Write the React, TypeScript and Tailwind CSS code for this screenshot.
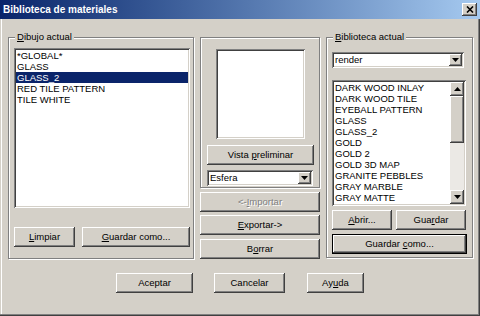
import React from "react";

const raised =
  "shadow-[inset_-1px_-1px_#404040,inset_1px_1px_#ffffff,inset_-2px_-2px_#808080,inset_2px_2px_#d4d0c8]";
const sunken =
  "shadow-[inset_1px_1px_#808080,inset_-1px_-1px_#ffffff,inset_2px_2px_#404040,inset_-2px_-2px_#d4d0c8]";
const etched = "border border-[#808080] shadow-[inset_1px_1px_#ffffff,1px_1px_#ffffff]";

function Btn({
  children,
  className = "",
  disabled = false,
  def = false,
}: {
  children: React.ReactNode;
  className?: string;
  disabled?: boolean;
  def?: boolean;
}) {
  if (def) {
    return (
      <div className={`border border-black bg-[#d4d0c8] ${className}`}>
        <div className={`flex h-full w-full items-center justify-center ${raised}`}>{children}</div>
      </div>
    );
  }
  return (
    <div
      className={`flex items-center justify-center bg-[#d4d0c8] ${raised} ${
        disabled ? "text-[#808080] [text-shadow:1px_1px_#ffffff]" : "text-black"
      } ${className}`}
    >
      {children}
    </div>
  );
}

function Arrow({ up = false }: { up?: boolean }) {
  return (
    <svg width="7" height="4" viewBox="0 0 7 4">
      {up ? <polygon points="3.5,0 7,4 0,4" fill="#000" /> : <polygon points="0,0 7,0 3.5,4" fill="#000" />}
    </svg>
  );
}

function Combo({ value, className = "" }: { value: string; className?: string }) {
  return (
    <div className={`flex bg-white p-[2px] ${sunken} ${className}`}>
      <div className="flex flex-1 items-center pl-[1px] leading-[12px]">{value}</div>
      <div className={`flex w-[13px] items-center justify-center bg-[#d4d0c8] ${raised}`}>
        <Arrow />
      </div>
    </div>
  );
}

function U({ children }: { children: React.ReactNode }) {
  return <span className="underline underline-offset-[1px]">{children}</span>;
}

const leftItems = ["*GLOBAL*", "GLASS", "GLASS_2", "RED TILE PATTERN", "TILE WHITE"];
const rightItems = [
  "DARK WOOD INLAY",
  "DARK WOOD TILE",
  "EYEBALL PATTERN",
  "GLASS",
  "GLASS_2",
  "GOLD",
  "GOLD 2",
  "GOLD 3D MAP",
  "GRANITE PEBBLES",
  "GRAY MARBLE",
  "GRAY MATTE",
];

export default function App() {
  return (
    <div className="flex h-[316px] w-[480px] flex-col overflow-hidden bg-[#d4d0c8] font-['Liberation_Sans',Arial,sans-serif] text-[9.5px] text-black shadow-[inset_-1px_-1px_#404040,inset_-2px_-2px_#808080,inset_1px_1px_#d4d0c8,inset_2px_2px_#ffffff]">
      {/* Title bar */}
      <div className="flex h-[19px] items-center bg-gradient-to-r from-[#0a246a] to-[#a6caf0] pl-[3px] pr-[3px]">
        <div className="flex-1 text-[10px] font-bold leading-[12px] text-white">Biblioteca de materiales</div>
        <div className={`flex h-[13px] w-[15px] items-center justify-center bg-[#d4d0c8] ${raised}`}>
          <svg width="8" height="7" viewBox="0 0 8 7">
            <path d="M1 0.5 L7 6.5 M7 0.5 L1 6.5" stroke="#000" strokeWidth="1.6" />
          </svg>
        </div>
      </div>

      {/* Upper row */}
      <div className="flex pl-[8px] pt-[18px]">
        {/* Left group */}
        <div className={`flex h-[222px] w-[186px] flex-col ${etched}`}>
          <div className="-mt-[7px] ml-[6px] w-fit bg-[#d4d0c8] px-[2px] leading-[12px]">
            <U>D</U>ibujo actual
          </div>
          <div className={`ml-[5px] mt-[5px] h-[160px] w-[176px] bg-white p-[2px] ${sunken}`}>
            {leftItems.map((it) => (
              <div
                key={it}
                className={`h-[11px] pl-[1px] leading-[11px] ${
                  it === "GLASS_2" ? "bg-[#0a246a] text-white" : ""
                }`}
              >
                {it}
              </div>
            ))}
          </div>
          <div className="ml-[5px] mt-[19px] flex gap-[7px]">
            <Btn className="h-[20px] w-[61px]">
              <span>
                <U>L</U>impiar
              </span>
            </Btn>
            <Btn className="h-[20px] w-[108px]">
              <span>
                <U>G</U>uardar como...
              </span>
            </Btn>
          </div>
        </div>

        {/* Middle column */}
        <div className="ml-[6px] flex w-[120px] flex-col">
          <div className={`flex h-[151px] w-[120px] flex-col ${etched}`}>
            <div className={`ml-[15px] mt-[11px] h-[90px] w-[89px] bg-white ${sunken}`} />
            <Btn className="ml-[6px] mt-[6px] h-[20px] w-[107px]">
              <span>
                Vista <U>p</U>reliminar
              </span>
            </Btn>
            <Combo value="Esfera" className="ml-[6px] mt-[5px] h-[16px] w-[106px]" />
          </div>
          <Btn disabled className="mt-[4px] h-[20px] w-[120px]">
            <span>
              &lt;-<U>I</U>mportar
            </span>
          </Btn>
          <Btn className="mt-[3px] h-[20px] w-[120px]">
            <span>
              <U>E</U>xportar-&gt;
            </span>
          </Btn>
          <Btn className="mt-[4px] h-[20px] w-[120px]">
            <span>
              B<U>o</U>rrar
            </span>
          </Btn>
        </div>

        {/* Right group */}
        <div className={`ml-[6px] flex h-[221px] w-[147px] flex-col ${etched}`}>
          <div className="-mt-[7px] ml-[6px] w-fit bg-[#d4d0c8] px-[2px] leading-[12px]">
            <U>B</U>iblioteca actual
          </div>
          <Combo value="render" className="ml-[5px] mt-[9px] h-[16px] w-[132px]" />
          <div className={`ml-[5px] mt-[12px] flex h-[126px] w-[134px] bg-white p-[2px] ${sunken}`}>
            <div className="flex-1">
              {rightItems.map((it) => (
                <div key={it} className="h-[11px] pl-[1px] leading-[11px]">
                  {it}
                </div>
              ))}
            </div>
            <div className="flex w-[14px] flex-col">
              <div className={`flex h-[14px] items-center justify-center bg-[#d4d0c8] ${raised}`}>
                <Arrow up />
              </div>
              <div className={`h-[47px] bg-[#d4d0c8] ${raised}`} />
              <div className="flex-1 bg-[#ebe9e5]" />
              <div className={`flex h-[14px] items-center justify-center bg-[#d4d0c8] ${raised}`}>
                <Arrow />
              </div>
            </div>
          </div>
          <div className="ml-[5px] mt-[4px] flex gap-[4px]">
            <Btn className="h-[20px] w-[60px]">
              <span>
                <U>A</U>brir...
              </span>
            </Btn>
            <Btn className="h-[20px] w-[70px]">
              <span>
                Gua<U>r</U>dar
              </span>
            </Btn>
          </div>
          <Btn def className="ml-[5px] mt-[4px] h-[20px] w-[135px]">
            <span>
              Guardar <U>c</U>omo...
            </span>
          </Btn>
        </div>
      </div>

      {/* Bottom buttons */}
      <div className="mt-[14px] flex">
        <Btn className="ml-[116px] h-[20px] w-[77px]">Aceptar</Btn>
        <Btn className="ml-[21px] h-[20px] w-[71px]">Cancelar</Btn>
        <Btn className="ml-[22px] h-[20px] w-[57px]">
          <span>
            Ay<U>u</U>da
          </span>
        </Btn>
      </div>
    </div>
  );
}
